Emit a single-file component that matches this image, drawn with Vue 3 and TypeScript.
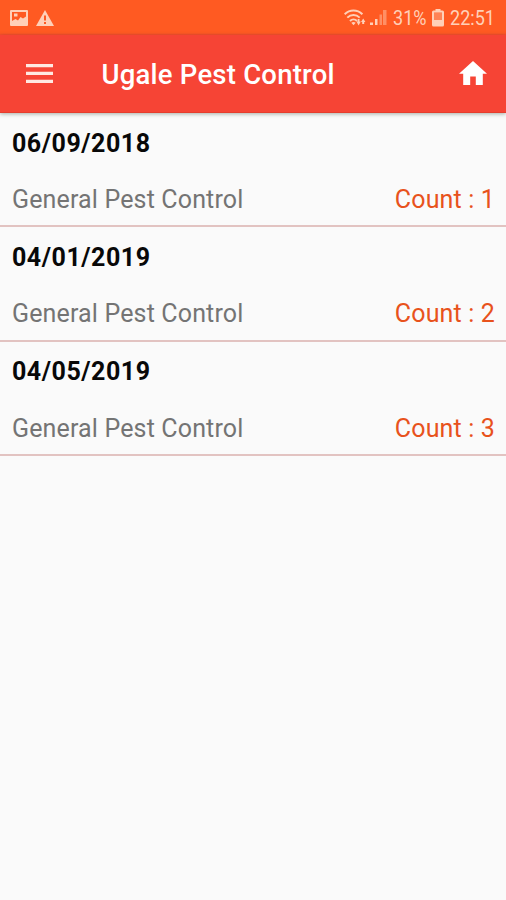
<script setup lang="ts">
interface Service {
  date: string
  name: string
  count: number
}

const services: Service[] = [
  { date: '06/09/2018', name: 'General Pest Control', count: 1 },
  { date: '04/01/2019', name: 'General Pest Control', count: 2 },
  { date: '04/05/2019', name: 'General Pest Control', count: 3 },
]
</script>

<template>
  <div class="screen">
    <div class="status">
      <svg class="picture" viewBox="0 0 18 16" width="18" height="16">
        <path fill-rule="evenodd" d="M1 0h16a1 1 0 0 1 1 1v14a1 1 0 0 1-1 1H1a1 1 0 0 1-1-1V1a1 1 0 0 1 1-1zM2 2v9l3.500-2 2.500 1.500 2.500-3.500 2.500 1.500 3-2V2zM4 3.500h3.500v3H4z" />
      </svg>
      <svg class="warning" viewBox="0 0 18 16" width="18" height="16">
        <path fill-rule="evenodd" d="M9 0l9 16H0zM8 5.500v5h2v-5zM8 12v2h2v-2z" />
      </svg>
      <span class="spacer"></span>
      <svg class="wifi" viewBox="0 0 23 18" width="23" height="18">
        <g fill="none" stroke="#ffd0b8" stroke-width="2">
          <path d="M.6 5.200C5.700.2 13.300.2 18.400 5.200" />
          <path d="M3.300 8.600c3.600-3.500 8.800-3.500 12.400 0" />
          <path d="M6 12c2-2 5-2 7 0" />
        </g>
        <path d="M7.300 13.700q2.200-1.500 4.400 0L9.500 16.200zM12.500 12.500h1.200V10h1.800v2.500h1.300l-2.200 4zM17 13l2.200-3.500 2.200 3.500h-1.200v2h-2v-2z" />
      </svg>
      <svg class="signal" viewBox="0 0 17 17" width="17" height="17">
        <path d="M0 13.500h3V16H0zM5 10h2.500v6H5z" />
        <path opacity=".45" d="M9.500 5.500H12V16H9.500zM13 1H16.500v15H13z" />
      </svg>
      <span class="percent"><span class="narrow">31%</span></span>
      <svg class="battery" viewBox="0 0 12 18" width="12" height="18">
        <path fill-rule="evenodd" d="M3.500 0h5v1.500H10.500a1.500 1.500 0 0 1 1.500 1.500v13a1.500 1.500 0 0 1-1.500 1.500H1.500A1.500 1.500 0 0 1 0 16V3a1.500 1.500 0 0 1 1.500-1.500h2zM2 3.500v7.500h8V3.500z" />
        <path opacity=".35" d="M2 3.500h8v7.500H2z" />
      </svg>
      <span class="clock"><span class="narrow">22:51</span></span>
    </div>
    <header class="toolbar">
      <svg class="menu" viewBox="0 0 27 20" width="27" height="20">
        <path d="M0 0h27v3.200H0zM0 7.800h27v3.200H0zM0 15.700h27v3.200H0z" />
      </svg>
      <h1 class="title">Ugale Pest Control</h1>
      <svg class="home" viewBox="2 3 20 17" width="28" height="24">
        <path d="M10 20v-6h4v6h5v-8h3L12 3 2 12h3v8z" />
      </svg>
    </header>
    <main class="list">
      <section v-for="service in services" :key="service.date" class="item">
        <div class="date">{{ service.date }}</div>
        <div class="detail">
          <span class="name">{{ service.name }}</span>
          <span class="count">Count : {{ service.count }}</span>
        </div>
      </section>
    </main>
  </div>
</template>

<style>
body {
  background: #fafafa;
}
</style>

<style scoped>
.screen {
  height: 900px;
  overflow: hidden;
  background: #fafafa;
  font-family: Roboto, "Liberation Sans", sans-serif;
  display: flex;
  flex-direction: column;
}
svg {
  display: block;
  flex: none;
}
.status {
  height: 35px;
  flex: none;
  box-sizing: border-box;
  padding: 0 11px 0 10px;
  display: flex;
  align-items: center;
  background: linear-gradient(#ff5a22 33px, #f94a2d 35px);
  color: #ffd0b8;
  fill: #ffd0b8;
}
.warning {
  margin-left: 8px;
}
.spacer {
  flex: 1;
}
.signal {
  margin-left: 3px;
}
.percent,
.clock {
  height: 24px;
  line-height: 25px;
  font-size: 20.500px;
  white-space: nowrap;
}
.percent {
  width: 33px;
  margin-left: 6px;
}
.clock {
  width: 45px;
  margin-left: 6px;
}
.battery {
  margin-left: 6px;
}
.narrow {
  display: inline-block;
  transform: scaleX(0.880);
  transform-origin: left;
}
.toolbar {
  height: 78px;
  flex: none;
  box-sizing: border-box;
  padding: 0 19px 0 26px;
  display: flex;
  align-items: center;
  background: #f64435;
  border-bottom: 1px solid #e53d2d;
  box-shadow: 0 1px 4px rgba(40, 60, 40, 0.4);
  fill: #fff;
}
.menu {
  fill: #ffe9e2;
}
.home {
  margin-bottom: 2px;
}
.title {
  margin: 2px 0 0 48.500px;
  flex: 1;
  color: #fff;
  font-size: 27.500px;
  font-weight: 500;
  line-height: 36px;
  letter-spacing: 0.220px;
  white-space: nowrap;
}
.item {
  height: 114.400px;
  box-sizing: border-box;
  padding: 14.600px 11px 0 12px;
  border-bottom: 2px solid #e2c3c1;
}
.date {
  height: 32px;
  line-height: 32px;
  font-size: 25px;
  font-weight: 700;
  letter-spacing: 0.530px;
  color: #080808;
}
.detail {
  margin-top: 24.400px;
  display: flex;
  justify-content: space-between;
  font-size: 25px;
  line-height: 32px;
  letter-spacing: 0.150px;
  white-space: nowrap;
}
.name {
  color: #747474;
}
.count {
  color: #e8521c;
}
</style>
